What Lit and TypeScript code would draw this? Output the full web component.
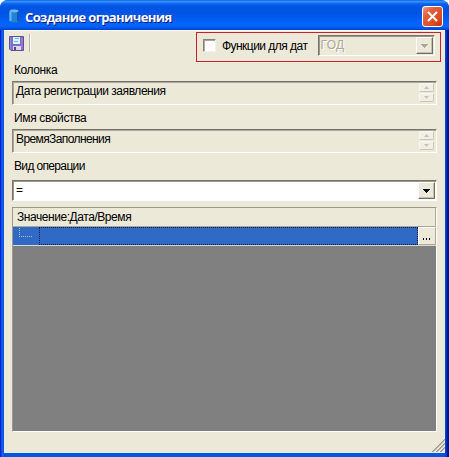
import { LitElement, html, css, svg } from "lit";
import { customElement, property } from "lit/decorators.js";

@customElement("spin-field")
class SpinField extends LitElement {
  @property() value = "";
  static styles = css`
    :host { display: flex; box-sizing: border-box; height: 24px; background: #ece9d8;
      border: 1px solid; border-color: #77756a #fff #fff #8b897b; box-shadow: inset 1px 1px 0 #aaa899; }
    .text { flex: 1; padding: 2px 0 0 3px; line-height: 15px; white-space: nowrap; }
    .spin { width: 17px; padding-top: 1px; display: flex; flex-direction: column; gap: 1px; }
    .btn { height: 9px; box-sizing: border-box; width: 15px; background: #f1efe6; border: 1px solid #f8f7f2;
      border-right-color: #c9c6b9; border-bottom-color: #c9c6b9; border-radius: 2px; display: flex; align-items: center; justify-content: center; }
    svg { display: block; }
  `;
  render() {
    return html`<div class="text">${this.value}</div>
      <div class="spin">
        <div class="btn"><svg width="5" height="3"><path d="M0 3L2.5 0L5 3Z" fill="#c5c3b8"/></svg></div>
        <div class="btn"><svg width="5" height="3"><path d="M0 0L2.5 3L5 0Z" fill="#c5c3b8"/></svg></div>
      </div>`;
  }
}

const arrow = (fill: string) => html`<svg width="7" height="4" shape-rendering="crispEdges">
  ${svg`<path d="M0 0H7V1H6V2H5V3H4V4H3V3H2V2H1V1H0Z" fill=${fill}/>`}</svg>`;

@customElement("app-root")
class AppRoot extends LitElement {
  static styles = css`
    :host { display: block; width: 449px; height: 457px; background: #f4f8fc; overflow: hidden;
      font: 12px/15px "Liberation Sans", Arial, sans-serif; color: #000; }
    * { box-sizing: border-box; }
    svg { display: block; flex: none; }
    .window { width: 449px; height: 457px; display: flex; flex-direction: column; border-radius: 8px 8px 0 0; overflow: hidden;
      background: linear-gradient(90deg, #0019cf 0, #0831d9 1px, #1663eb 2px, #0855dd 4px, #0855dd 444px, #0441d8 446px, #001ea0 447px, #00138c 449px); }
    .title { height: 30px; flex: none; display: flex; align-items: center; padding: 2px 6px 0 9px;
      background: linear-gradient(#0a50cc 0, #3a93ff 1px, #2b8bff 2px, #0a62ef 4px, #0054e3 7px, #0055e5 14px, #0360f8 21px, #0366ff 26px, #0155e8 28px, #003dd0 30px); }
    .caption { flex: 1; margin-left: 6px; color: #fff; font: bold 13px/18px "Open Sans", "Noto Sans", sans-serif;
      letter-spacing: -.64px; white-space: nowrap; text-shadow: 1px 1px 0 #0a1883; padding-top: 1px; }
    .close { width: 21px; height: 21px; border: 1px solid #fff; border-radius: 3px; display: flex; align-items: center; justify-content: center;
      background: linear-gradient(135deg, #ef9a80 0, #e2603c 30%, #dc4c22 70%, #bc3410 100%); }
    .client { flex: 1; margin: 0 4px 4px; background: #ece9d8; border-top: 1px solid #fff; border-bottom: 1px solid #dff0f4;
      display: flex; flex-direction: column; }
    .toolbar { height: 32px; flex: none; display: flex; padding: 1px 4px 0 5px; }
    .save { margin-top: 4px; }
    .sep { width: 2px; height: 18px; margin: 2px 0 0 5px; border-left: 1px solid #b8b5a5; border-right: 1px solid #faf9f3; }
    .dates { margin-left: auto; width: 245px; height: 30px; border: 1px solid #c8202a; display: flex; padding: 2px 5px 0 6px; }
    .check { width: 13px; height: 13px; margin-top: 4px; background: #fff; border: 1px solid; border-color: #85837a #f3f1e8 #f3f1e8 #85837a; box-shadow: inset 1px 1px 0 #aaa79c; }
    .datelabel { margin: 4px 0 0 6px; width: 96px; white-space: nowrap; letter-spacing: -.53px; }
    .combo { display: flex; border: 1px solid; border-color: #77756a #fff #fff #77756a; box-shadow: inset 1px 1px 0 #9b988b; }
    .combo .val { flex: 1; padding: 2px 0 0 3px; white-space: nowrap; }
    .drop { width: 17px; margin: 1px; display: flex; align-items: center; justify-content: center; background: #ece9d8;
      border: 1px solid; border-color: #fff #716f64 #716f64 #fff; box-shadow: inset -1px -1px 0 #c4c1b0; }
    .year { width: 118px; height: 21px; }
    .year .val { color: #aca899; letter-spacing: .3px; padding-left: 2px; text-shadow: 1px 1px 0 #fff; }
    .body { flex: 1; padding: 0 8px 21px; display: flex; flex-direction: column; }
    .label { height: 18px; flex: none; padding-left: 2px; white-space: nowrap; }
    .l1 { letter-spacing: -.4px; }
    .l2 { letter-spacing: -.36px; }
    .gap { margin-top: 6px; }
    .f1 { letter-spacing: -.44px; }
    .f2 { letter-spacing: -.6px; }
    .op { height: 21px; flex: none; background: #fff; }
    .l3 { height: 21px; margin-top: 6px; letter-spacing: -.65px; }
    .grid { margin-top: 6px; flex: 1; display: flex; flex-direction: column; background: #808080;
      border: 1px solid; border-color: #9d9a8b #fff #fff #9d9a8b; }
    .head { height: 19px; flex: none; background: #ece9d8; border-right: 1px solid #aca899; border-bottom: 1px solid #aca899; padding: 2px 0 0 4px; letter-spacing: -.44px; }
    .row { height: 19px; flex: none; display: flex; background: #316ac5; border-bottom: 1px solid #d8d8d8; }
    .tree { width: 26px; padding: 1px 0 0 6px; }
    .cell { flex: 1; border: 1px dotted #081b45; }
    .more { width: 18px; background: #ece9d8; border: 1px solid; border-color: #fff #aca899 #aca899 #fff; display: flex; align-items: flex-end; justify-content: center; padding-bottom: 4px; }
    .grip { align-self: flex-end; margin-top: -15px; }
  `;
  render() {
    return html`<div class="window">
      <div class="title">
        <svg width="10" height="14" viewBox="0 0 10 14"><path d="M0 2Q5-1 10 2V12Q5 15 0 12Z" fill="#2380d6"/><path d="M1.5 3V12" stroke="#62b5ee" stroke-width="2"/><path d="M9 3V12" stroke="#0d5ab4" stroke-width="2"/><ellipse cx="5" cy="2" rx="4.3" ry="1.4" fill="#68b9ee"/></svg>
        <div class="caption">Создание ограничения</div>
        <div class="close"><svg width="13" height="13"><path d="M2 2L11 11M11 2L2 11" stroke="#fff" stroke-width="2.1"/></svg></div>
      </div>
      <div class="client">
        <div class="toolbar">
          <svg class="save" width="15" height="15" viewBox="0 0 15 15"><path d="M.5.5H14.5V14.5H2L.5 13Z" fill="#7771cc" stroke="#5c4fa0"/><path d="M1.5 1V13" stroke="#8f8ae0"/><path d="M4 1H11V8H4Z" fill="#dcf1fb"/><path d="M6 2.5H10M5 5.5H9" stroke="#63bdeb"/><path d="M4 10H12V14H4Z" fill="#d9d7e8"/><path d="M5 11H7V14H5Z" fill="#4d4585"/><path d="M13 2V13" stroke="#9f74c8" stroke-width="2"/></svg>
          <div class="sep"></div>
          <div class="dates">
            <div class="check"></div><div class="datelabel">Функции для дат</div>
            <div class="combo year"><div class="val">ГОД</div><div class="drop">${arrow("#aca899")}</div></div>
          </div>
        </div>
        <div class="body">
          <div class="label l1">Колонка</div>
          <spin-field class="f1" value="Дата регистрации заявления"></spin-field>
          <div class="label gap l2">Имя свойства</div>
          <spin-field class="f2" value="ВремяЗаполнения"></spin-field>
          <div class="label l3">Вид операции</div>
          <div class="combo op"><div class="val">=</div><div class="drop">${arrow("#000")}</div></div>
          <div class="grid">
            <div class="head">Значение:Дата/Время</div>
            <div class="row">
              <div class="tree"><svg width="15" height="10" shape-rendering="crispEdges"><path d="M.5 0V8.5H14" fill="none" stroke="#a9bddf" stroke-dasharray="1 1"/></svg></div>
              <div class="cell"></div>
              <div class="more"><svg width="8" height="2" shape-rendering="crispEdges"><path d="M0 0H1V2H0ZM3 0H4V2H3ZM6 0H7V2H6Z"/></svg></div>
            </div>
          </div>
        </div>
        <svg class="grip" width="14" height="14"><path d="M1 14L14 1M5 14L14 5M9 14L14 9" stroke="#a09d8d" stroke-width="1.8"/><path d="M0 14L14 0M4 14L14 4M8 14L14 8" stroke="#fff" stroke-width=".7"/></svg>
      </div>
    </div>`;
  }
}
